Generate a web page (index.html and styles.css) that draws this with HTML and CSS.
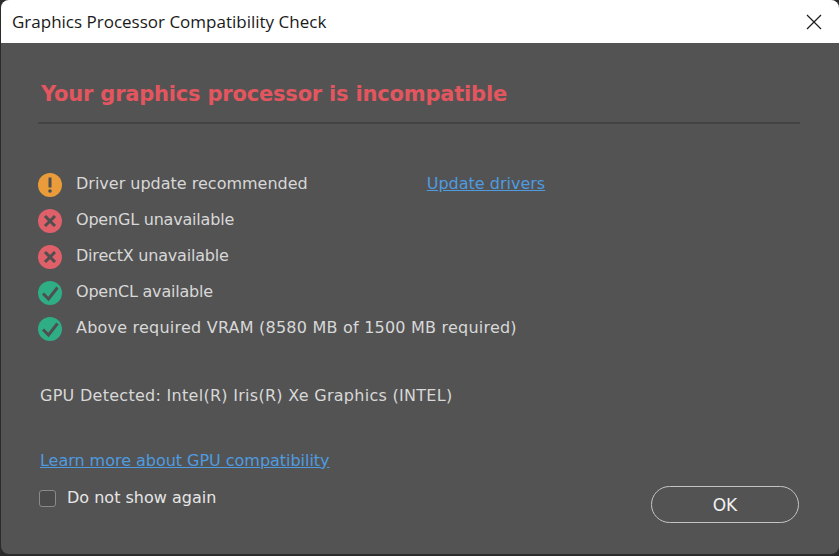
FILE: index.html
```html
<!DOCTYPE html>
<html lang="en">
<head>
    <title>Graphics Processor Compatibility Check</title>
    <link rel="stylesheet" href="styles.css">
</head>
<body>
    <div class="dialog">
        <div class="titlebar">
            <span class="title">Graphics Processor Compatibility Check</span>
            <svg class="close" width="16" height="16" viewBox="0 0 16 16">
                <path d="M1 1L15 15M15 1L1 15" stroke="#1a1a1a" stroke-width="1.2" fill="none"/>
            </svg>
        </div>
        <div class="content">
            <h1>Your graphics processor is incompatible</h1>
            <div class="rule"></div>
            <div class="checks">
                <div class="check">
                    <svg class="icon" viewBox="0 0 24 24"><circle cx="12" cy="12" r="12" fill="#eb9c3a"/><path d="M12 4.5V14.5" stroke="#4f4f4f" stroke-width="3" fill="none"/><circle cx="12" cy="18" r="1.8" fill="#4f4f4f"/></svg>
                    <span class="label">Driver update recommended</span>
                    <a class="link update" href="#">Update drivers</a>
                </div>
                <div class="check">
                    <svg class="icon" viewBox="0 0 24 24"><circle cx="12" cy="12" r="12" fill="#e0606a"/><path d="M7 7L17 17M17 7L7 17" stroke="#4f4f4f" stroke-width="3" fill="none"/></svg>
                    <span class="label tight">OpenGL unavailable</span>
                </div>
                <div class="check">
                    <svg class="icon" viewBox="0 0 24 24"><circle cx="12" cy="12" r="12" fill="#e0606a"/><path d="M7 7L17 17M17 7L7 17" stroke="#4f4f4f" stroke-width="3" fill="none"/></svg>
                    <span class="label tight">DirectX unavailable</span>
                </div>
                <div class="check">
                    <svg class="icon" viewBox="0 0 24 24"><circle cx="12" cy="12" r="12" fill="#2fae85"/><path d="M5 12.5L10.5 18L19.5 6.5" stroke="#4f4f4f" stroke-width="3" fill="none"/></svg>
                    <span class="label tight">OpenCL available</span>
                </div>
                <div class="check">
                    <svg class="icon" viewBox="0 0 24 24"><circle cx="12" cy="12" r="12" fill="#2fae85"/><path d="M5 12.5L10.5 18L19.5 6.5" stroke="#4f4f4f" stroke-width="3" fill="none"/></svg>
                    <span class="label wide">Above required VRAM (8580 MB of 1500 MB required)</span>
                </div>
            </div>
            <p class="gpu">GPU Detected: Intel(R) Iris(R) Xe Graphics (INTEL)</p>
            <a class="link learn" href="#">Learn more about GPU compatibility</a>
            <div class="footer">
                <label class="again"><span class="box"></span>Do not show again</label>
                <button class="ok">OK</button>
            </div>
        </div>
    </div>
</body>
</html>
```

FILE: styles.css
```css
html, body {
    margin: 0;
    height: 100%;
}
body {
    width: 839px;
    height: 556px;
    overflow: hidden;
    background: #2b2b2b;
    font-family: "DejaVu Sans", sans-serif;
}
.dialog {
    width: 838px;
    height: 554px;
    margin-left: 1px;
    border-radius: 8px;
    overflow: hidden;
    background: #535353;
}
.titlebar {
    height: 43px;
    background: #fff;
    display: flex;
    align-items: center;
    justify-content: space-between;
    padding: 0 17px 0 11px;
}
.title {
    font-family: "Open Sans", sans-serif;
    font-size: 17px;
    color: #1a1a1a;
}
.close {
    display: block;
}
.content {
    padding: 37px 39px 0 37px;
}
h1 {
    margin: 0;
    padding-left: 3px;
    font-size: 21px;
    letter-spacing: -0.2px;
    line-height: 28px;
    font-weight: bold;
    color: #e4565f;
}
.rule {
    height: 2px;
    background: #434343;
    margin-top: 14px;
}
.checks {
    display: flex;
    flex-direction: column;
    gap: 12px;
    margin-top: 49px;
}
.check {
    display: flex;
    align-items: center;
    height: 24px;
}
.icon {
    width: 24px;
    height: 24px;
    flex: none;
}
.label {
    margin-left: 14px;
    padding-bottom: 4px;
    font-size: 16px;
    color: #d8d8d8;
}
.tight {
    letter-spacing: -0.2px;
}
.wide {
    letter-spacing: 0.22px;
}
.link {
    font-size: 16px;
    color: #4f9be0;
}
.update {
    margin-left: 119px;
    padding-bottom: 4px;
}
.gpu {
    margin: 43px 0 0 2px;
    font-size: 16px;
    letter-spacing: 0.28px;
    line-height: 24px;
    color: #d8d8d8;
}
.learn {
    display: inline-block;
    margin: 41px 0 0 2px;
    letter-spacing: -0.03px;
    line-height: 24px;
}
.footer {
    display: flex;
    justify-content: space-between;
    align-items: flex-start;
    margin-top: 13px;
    padding-left: 1px;
}
.again {
    display: flex;
    align-items: center;
    font-size: 16px;
    line-height: 24px;
    color: #e6e6e6;
}
.box {
    width: 15px;
    height: 15px;
    border: 1px solid #8a8a8a;
    border-radius: 3px;
    background: #4b4b4b;
    margin-right: 11px;
}
.ok {
    width: 148px;
    height: 37px;
    margin-right: 1px;
    border: 1.5px solid #c4c4c4;
    border-radius: 19px;
    background: transparent;
    color: #f0f0f0;
    font-family: "DejaVu Sans", sans-serif;
    font-size: 17px;
}
```
